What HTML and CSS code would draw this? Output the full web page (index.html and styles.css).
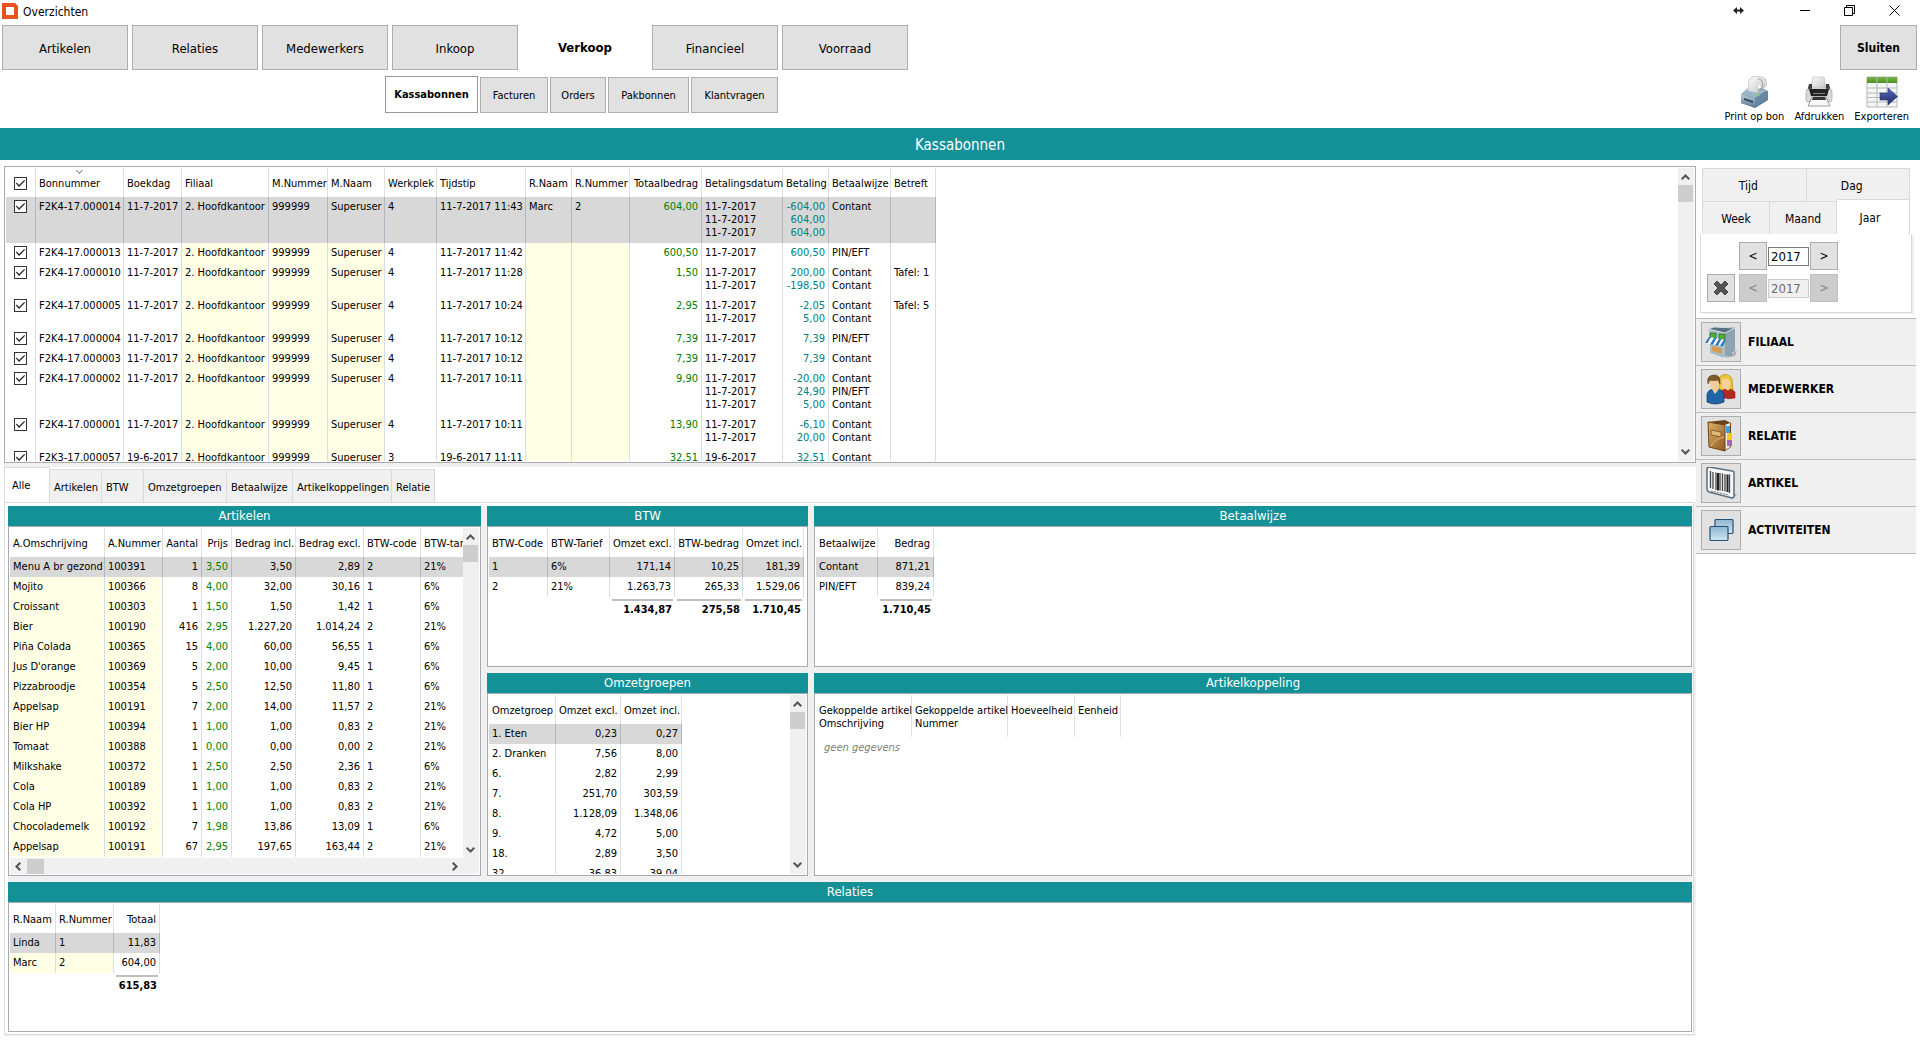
FILE: index.html
```html
<!DOCTYPE html>
<html lang="nl">
<head>
<meta charset="utf-8">
<title>Overzichten</title>
<link rel="stylesheet" href="styles.css">
</head>
<body>
<svg class="defs" aria-hidden="true">
  <defs>
    <symbol id="up" viewBox="0 0 9 6"><path d="M0 4.5 4.5 0 9 4.5 7.6 6 4.5 3 1.4 6Z" fill="#555"/></symbol>
    <symbol id="down" viewBox="0 0 9 6"><path d="M0 1.5 4.5 6 9 1.5 7.6 0 4.5 3 1.4 0Z" fill="#555"/></symbol>
    <symbol id="left" viewBox="0 0 6 9"><path d="M4.500 0 0 4.500 4.500 9 6 7.600 3 4.500 6 1.400Z" fill="#555"/></symbol>
    <symbol id="right" viewBox="0 0 6 9"><path d="M1.500 0 6 4.500 1.500 9 0 7.600 3 4.500 0 1.400Z" fill="#555"/></symbol>
    <linearGradient id="steel" x1="0" y1="0" x2="0" y2="1"><stop offset="0" stop-color="#b9cad8"/><stop offset="1" stop-color="#5f7f99"/></linearGradient>
    <linearGradient id="paper" x1="0" y1="0" x2="1" y2="1"><stop offset="0" stop-color="#fff"/><stop offset="1" stop-color="#bfc2c4"/></linearGradient>
    <linearGradient id="glass" x1="0" y1="0" x2="0" y2="1"><stop offset="0" stop-color="#8fb6d2"/><stop offset="1" stop-color="#cfe6f1"/></linearGradient>
    <linearGradient id="leather" x1="0" y1="0" x2="1" y2="1"><stop offset="0" stop-color="#dcb26c"/><stop offset="1" stop-color="#8f5a1e"/></linearGradient>
    <linearGradient id="green" x1="0" y1="0" x2="0" y2="1"><stop offset="0" stop-color="#7ab648"/><stop offset="1" stop-color="#4d8f1e"/></linearGradient>
    <linearGradient id="navy" x1="0" y1="0" x2="0" y2="1"><stop offset="0" stop-color="#5a6ab5"/><stop offset="1" stop-color="#1c2a6b"/></linearGradient>
  </defs>
</svg>

<header class="titlebar">
  <svg class="logo" viewBox="0 0 16 16"><path d="M0 0H13L16 3V16H0Z" fill="#e9511d"/><path d="M4 4H12V12H4Z" fill="#fff"/></svg>
  <h1>Overzichten</h1>
  <div class="window-buttons">
    <button type="button" aria-label="Verplaatsen"><svg width="11" height="9" viewBox="0 0 11 9"><path d="M0 4.500 4 1V3.500H7V1L11 4.500 7 8V5.500H4V8Z" fill="#222"/></svg></button>
    <button type="button" aria-label="Minimaliseren"><svg width="10" height="11" viewBox="0 0 10 11"><path d="M0 5.500H10" stroke="#000"/></svg></button>
    <button type="button" aria-label="Herstellen"><svg width="11" height="11" viewBox="0 0 11 11"><path d="M.5 2.500H8.500V10.500H.5ZM2.500 2.500V.5H10.500V8.500H8.500" fill="none" stroke="#000"/></svg></button>
    <button type="button" aria-label="Venster sluiten"><svg width="11" height="11" viewBox="0 0 11 11"><path d="M.5.5 10.500 10.500M10.500.5.5 10.500" stroke="#000"/></svg></button>
  </div>
</header>

<nav class="mainnav">
  <button type="button">Artikelen</button>
  <button type="button">Relaties</button>
  <button type="button">Medewerkers</button>
  <button type="button">Inkoop</button>
  <button type="button" class="current">Verkoop</button>
  <button type="button">Financieel</button>
  <button type="button">Voorraad</button>
  <button type="button" class="close">Sluiten</button>
</nav>

<div class="subbar">
  <nav class="subnav">
    <button type="button" class="current">Kassabonnen</button>
    <button type="button">Facturen</button>
    <button type="button">Orders</button>
    <button type="button">Pakbonnen</button>
    <button type="button">Klantvragen</button>
  </nav>
  <div class="tools">
    <button type="button">
      <svg width="32" height="32" viewBox="0 0 32 32"><path d="M9 16 3 19V27L17 32 30 24V16L24 12Z" fill="#4f6f88"/><path d="M3 18 17 22V31L3 27Z" fill="url(#steel)"/><path d="M17 22 30 15V23L17 31Z" fill="#6887a0"/><path d="M3 18 10 12 30 14 17 22Z" fill="#9bb4c7"/><path d="M9 15C12 12 8 4 14 1 18 0 26 0 28 4 30 9 27 12 24 13 22 11 24 7 20 8 19 11 21 15 20 17Z" fill="url(#paper)" stroke="#b5b5b5" stroke-width=".6"/><path d="M20 3C25 3 25 8 24 12" fill="none" stroke="#999" stroke-width="1"/><path d="M6 22 15 25V27L6 24Z" fill="#34495b"/><circle cx="21" cy="19" r="1.200" fill="#6fd42c"/></svg>
      <span>Print op bon</span></button>
    <button type="button">
      <svg width="32" height="32" viewBox="0 0 32 32"><path d="M10 1H21L23 12H8Z" fill="url(#paper)" stroke="#bbb" stroke-width=".7"/><path d="M6 8H9V13H23V8H26L29 20H3Z" fill="#3c3c3c"/><path d="M3 16Q3 13 6 13H26Q29 13 29 16V24Q29 26 26 26H6Q3 26 3 24Z" fill="#d9d9d9" stroke="#999" stroke-width=".6"/><path d="M6 13H26L24 20H8Z" fill="#222"/><path d="M10 17H22V18H10Z" fill="#888"/><path d="M9 21H23L27 30H5Z" fill="#f8f8f8" stroke="#777" stroke-width=".7"/><path d="M10 21H22L23 24H9Z" fill="#333"/></svg>
      <span>Afdrukken</span></button>
    <button type="button">
      <svg width="32" height="32" viewBox="0 0 32 32"><path d="M1 1H31V31H1Z" fill="#f4f5f5" stroke="#b5b8b8"/><path d="M1 1H31V7H1Z" fill="url(#green)"/><path d="M1 12H31M1 17H31M1 21.500H31M1 26H31M11 1V31M21 1V31" stroke="#b5baba"/><path d="M14 17H22V12L31.500 20.500 22 29V24H14Z" fill="url(#navy)" stroke="#26336f" stroke-width=".6"/></svg>
      <span>Exporteren</span></button>
  </div>
</div>

<h2 class="banner">Kassabonnen</h2>

<main class="workspace">
  <div class="content">
    <section class="frame receipts">
      <div class="view">
        <table>
          <colgroup><col><col><col><col><col><col><col><col><col><col><col><col><col><col><col></colgroup>
          <thead><tr><th><input type="checkbox" checked aria-label="Alles selecteren"></th><th class="sorted">Bonnummer</th><th>Boekdag</th><th>Filiaal</th><th>M.Nummer</th><th>M.Naam</th><th>Werkplek</th><th>Tijdstip</th><th>R.Naam</th><th>R.Nummer</th><th>Totaalbedrag</th><th>Betalingsdatum</th><th>Betaling</th><th>Betaalwijze</th><th>Betreft</th></tr></thead>
          <tbody>
            <tr class="selected"><td><input type="checkbox" checked aria-label="F2K4-17.000014"></td><td>F2K4-17.000014</td><td>11-7-2017</td><td>2. Hoofdkantoor</td><td>999999</td><td>Superuser</td><td>4</td><td>11-7-2017 11:43</td><td>Marc</td><td>2</td><td>604,00</td><td>11-7-2017<br>11-7-2017<br>11-7-2017</td><td>-604,00<br>604,00<br>604,00</td><td>Contant</td><td></td></tr>
            <tr><td><input type="checkbox" checked aria-label="F2K4-17.000013"></td><td>F2K4-17.000013</td><td>11-7-2017</td><td>2. Hoofdkantoor</td><td>999999</td><td>Superuser</td><td>4</td><td>11-7-2017 11:42</td><td></td><td></td><td>600,50</td><td>11-7-2017</td><td>600,50</td><td>PIN/EFT</td><td></td></tr>
            <tr><td><input type="checkbox" checked aria-label="F2K4-17.000010"></td><td>F2K4-17.000010</td><td>11-7-2017</td><td>2. Hoofdkantoor</td><td>999999</td><td>Superuser</td><td>4</td><td>11-7-2017 11:28</td><td></td><td></td><td>1,50</td><td>11-7-2017<br>11-7-2017</td><td>200,00<br>-198,50</td><td>Contant<br>Contant</td><td>Tafel: 1</td></tr>
            <tr><td><input type="checkbox" checked aria-label="F2K4-17.000005"></td><td>F2K4-17.000005</td><td>11-7-2017</td><td>2. Hoofdkantoor</td><td>999999</td><td>Superuser</td><td>4</td><td>11-7-2017 10:24</td><td></td><td></td><td>2,95</td><td>11-7-2017<br>11-7-2017</td><td>-2,05<br>5,00</td><td>Contant<br>Contant</td><td>Tafel: 5</td></tr>
            <tr><td><input type="checkbox" checked aria-label="F2K4-17.000004"></td><td>F2K4-17.000004</td><td>11-7-2017</td><td>2. Hoofdkantoor</td><td>999999</td><td>Superuser</td><td>4</td><td>11-7-2017 10:12</td><td></td><td></td><td>7,39</td><td>11-7-2017</td><td>7,39</td><td>PIN/EFT</td><td></td></tr>
            <tr><td><input type="checkbox" checked aria-label="F2K4-17.000003"></td><td>F2K4-17.000003</td><td>11-7-2017</td><td>2. Hoofdkantoor</td><td>999999</td><td>Superuser</td><td>4</td><td>11-7-2017 10:12</td><td></td><td></td><td>7,39</td><td>11-7-2017</td><td>7,39</td><td>Contant</td><td></td></tr>
            <tr><td><input type="checkbox" checked aria-label="F2K4-17.000002"></td><td>F2K4-17.000002</td><td>11-7-2017</td><td>2. Hoofdkantoor</td><td>999999</td><td>Superuser</td><td>4</td><td>11-7-2017 10:11</td><td></td><td></td><td>9,90</td><td>11-7-2017<br>11-7-2017<br>11-7-2017</td><td>-20,00<br>24,90<br>5,00</td><td>Contant<br>PIN/EFT<br>Contant</td><td></td></tr>
            <tr><td><input type="checkbox" checked aria-label="F2K4-17.000001"></td><td>F2K4-17.000001</td><td>11-7-2017</td><td>2. Hoofdkantoor</td><td>999999</td><td>Superuser</td><td>4</td><td>11-7-2017 10:11</td><td></td><td></td><td>13,90</td><td>11-7-2017<br>11-7-2017</td><td>-6,10<br>20,00</td><td>Contant<br>Contant</td><td></td></tr>
            <tr><td><input type="checkbox" checked aria-label="F2K3-17.000057"></td><td>F2K3-17.000057</td><td>19-6-2017</td><td>2. Hoofdkantoor</td><td>999999</td><td>Superuser</td><td>3</td><td>19-6-2017 11:11</td><td></td><td></td><td>32,51</td><td>19-6-2017</td><td>32,51</td><td>Contant</td><td></td></tr>
          </tbody>
        </table>
      </div>
      <div class="vscroll"><svg width="9" height="6"><use href="#up"/></svg><i></i><svg width="9" height="6"><use href="#down"/></svg></div>
    </section>

    <section class="details">
      <nav class="tabs">
        <button type="button" class="current">Alle</button>
        <button type="button">Artikelen</button>
        <button type="button">BTW</button>
        <button type="button">Omzetgroepen</button>
        <button type="button">Betaalwijze</button>
        <button type="button">Artikelkoppelingen</button>
        <button type="button">Relatie</button>
      </nav>
      <div class="tabpage">
        <div class="panels">
          <section class="panel articles">
            <h3>Artikelen</h3>
            <div class="frame">
              <div class="column">
                <div class="view">
                  <table>
                    <colgroup><col><col><col><col><col><col><col><col></colgroup>
                    <thead><tr><th>A.Omschrijving</th><th>A.Nummer</th><th>Aantal</th><th>Prijs</th><th>Bedrag incl.</th><th>Bedrag excl.</th><th>BTW-code</th><th>BTW-tarief</th></tr></thead>
                    <tbody>
                      <tr class="selected"><td>Menu A br gezond</td><td>100391</td><td>1</td><td>3,50</td><td>3,50</td><td>2,89</td><td>2</td><td>21%</td></tr>
                      <tr><td>Mojito</td><td>100366</td><td>8</td><td>4,00</td><td>32,00</td><td>30,16</td><td>1</td><td>6%</td></tr>
                      <tr><td>Croissant</td><td>100303</td><td>1</td><td>1,50</td><td>1,50</td><td>1,42</td><td>1</td><td>6%</td></tr>
                      <tr><td>Bier</td><td>100190</td><td>416</td><td>2,95</td><td>1.227,20</td><td>1.014,24</td><td>2</td><td>21%</td></tr>
                      <tr><td>Piña Colada</td><td>100365</td><td>15</td><td>4,00</td><td>60,00</td><td>56,55</td><td>1</td><td>6%</td></tr>
                      <tr><td>Jus D'orange</td><td>100369</td><td>5</td><td>2,00</td><td>10,00</td><td>9,45</td><td>1</td><td>6%</td></tr>
                      <tr><td>Pizzabroodje</td><td>100354</td><td>5</td><td>2,50</td><td>12,50</td><td>11,80</td><td>1</td><td>6%</td></tr>
                      <tr><td>Appelsap</td><td>100191</td><td>7</td><td>2,00</td><td>14,00</td><td>11,57</td><td>2</td><td>21%</td></tr>
                      <tr><td>Bier HP</td><td>100394</td><td>1</td><td>1,00</td><td>1,00</td><td>0,83</td><td>2</td><td>21%</td></tr>
                      <tr><td>Tomaat</td><td>100388</td><td>1</td><td>0,00</td><td>0,00</td><td>0,00</td><td>2</td><td>21%</td></tr>
                      <tr><td>Milkshake</td><td>100372</td><td>1</td><td>2,50</td><td>2,50</td><td>2,36</td><td>1</td><td>6%</td></tr>
                      <tr><td>Cola</td><td>100189</td><td>1</td><td>1,00</td><td>1,00</td><td>0,83</td><td>2</td><td>21%</td></tr>
                      <tr><td>Cola HP</td><td>100392</td><td>1</td><td>1,00</td><td>1,00</td><td>0,83</td><td>2</td><td>21%</td></tr>
                      <tr><td>Chocolademelk</td><td>100192</td><td>7</td><td>1,98</td><td>13,86</td><td>13,09</td><td>1</td><td>6%</td></tr>
                      <tr><td>Appelsap</td><td>100191</td><td>67</td><td>2,95</td><td>197,65</td><td>163,44</td><td>2</td><td>21%</td></tr>
                    </tbody>
                  </table>
                </div>
                <div class="hscroll"><svg width="6" height="9"><use href="#left"/></svg><i></i><svg width="6" height="9"><use href="#right"/></svg></div>
              </div>
              <div class="vscroll with-corner"><svg width="9" height="6"><use href="#up"/></svg><i></i><svg width="9" height="6"><use href="#down"/></svg></div>
            </div>
          </section>

          <section class="panel vat">
            <h3>BTW</h3>
            <div class="frame"><div class="view">
              <table>
                <colgroup><col><col><col><col><col></colgroup>
                <thead><tr><th>BTW-Code</th><th>BTW-Tarief</th><th>Omzet excl.</th><th>BTW-bedrag</th><th>Omzet incl.</th></tr></thead>
                <tbody>
                  <tr class="selected"><td>1</td><td>6%</td><td>171,14</td><td>10,25</td><td>181,39</td></tr>
                  <tr><td>2</td><td>21%</td><td>1.263,73</td><td>265,33</td><td>1.529,06</td></tr>
                </tbody>
                <tfoot><tr><td></td><td></td><td><b>1.434,87</b></td><td><b>275,58</b></td><td><b>1.710,45</b></td></tr></tfoot>
              </table>
            </div></div>
          </section>

          <section class="panel payments">
            <h3>Betaalwijze</h3>
            <div class="frame"><div class="view">
              <table>
                <colgroup><col><col></colgroup>
                <thead><tr><th>Betaalwijze</th><th>Bedrag</th></tr></thead>
                <tbody>
                  <tr class="selected"><td>Contant</td><td>871,21</td></tr>
                  <tr><td>PIN/EFT</td><td>839,24</td></tr>
                </tbody>
                <tfoot><tr><td></td><td><b>1.710,45</b></td></tr></tfoot>
              </table>
            </div></div>
          </section>

          <section class="panel groups">
            <h3>Omzetgroepen</h3>
            <div class="frame">
              <div class="view">
                <table>
                  <colgroup><col><col><col></colgroup>
                  <thead><tr><th>Omzetgroep</th><th>Omzet excl.</th><th>Omzet incl.</th></tr></thead>
                  <tbody>
                    <tr class="selected"><td>1. Eten</td><td>0,23</td><td>0,27</td></tr>
                    <tr><td>2. Dranken</td><td>7,56</td><td>8,00</td></tr>
                    <tr><td>6.</td><td>2,82</td><td>2,99</td></tr>
                    <tr><td>7.</td><td>251,70</td><td>303,59</td></tr>
                    <tr><td>8.</td><td>1.128,09</td><td>1.348,06</td></tr>
                    <tr><td>9.</td><td>4,72</td><td>5,00</td></tr>
                    <tr><td>18.</td><td>2,89</td><td>3,50</td></tr>
                    <tr><td>32.</td><td>36,83</td><td>39,04</td></tr>
                  </tbody>
                </table>
              </div>
              <div class="vscroll"><svg width="9" height="6"><use href="#up"/></svg><i></i><svg width="9" height="6"><use href="#down"/></svg></div>
            </div>
          </section>

          <section class="panel links">
            <h3>Artikelkoppeling</h3>
            <div class="frame"><div class="view">
              <table>
                <colgroup><col><col><col><col></colgroup>
                <thead><tr><th>Gekoppelde artikel<br>Omschrijving</th><th>Gekoppelde artikel<br>Nummer</th><th>Hoeveelheid</th><th>Eenheid</th></tr></thead>
              </table>
              <p class="empty">geen gegevens</p>
            </div></div>
          </section>

          <section class="panel relations">
            <h3>Relaties</h3>
            <div class="frame"><div class="view">
              <table>
                <colgroup><col><col><col></colgroup>
                <thead><tr><th>R.Naam</th><th>R.Nummer</th><th>Totaal</th></tr></thead>
                <tbody>
                  <tr class="selected"><td>Linda</td><td>1</td><td>11,83</td></tr>
                  <tr><td>Marc</td><td>2</td><td>604,00</td></tr>
                </tbody>
                <tfoot><tr><td></td><td></td><td><b>615,83</b></td></tr></tfoot>
              </table>
            </div></div>
          </section>
        </div>
      </div>
    </section>
  </div>

  <aside class="sidebar">
    <section class="period">
      <div class="period-tabs wide">
        <button type="button">Tijd</button>
        <button type="button">Dag</button>
      </div>
      <div class="period-tabs">
        <button type="button">Week</button>
        <button type="button">Maand</button>
        <button type="button" class="current">Jaar</button>
      </div>
      <div class="period-page">
        <div class="stepper">
          <button type="button" aria-label="Vorig jaar">&lt;</button>
          <input type="text" value="2017" aria-label="Jaar van">
          <button type="button" aria-label="Volgend jaar">&gt;</button>
        </div>
        <div class="stepper">
          <button type="button" class="clear" aria-label="Wissen"><svg width="16" height="16" viewBox="0 0 16 16"><path d="M4 1 8 5 12 1 15 4 11 8 15 12 12 15 8 11 4 15 1 12 5 8 1 4Z" fill="#555" stroke="#333" stroke-width=".8"/></svg></button>
          <button type="button" disabled aria-label="Vorig eindjaar">&lt;</button>
          <input type="text" value="2017" disabled aria-label="Jaar tot">
          <button type="button" disabled aria-label="Volgend eindjaar">&gt;</button>
        </div>
      </div>
    </section>
    <ul class="filters">
      <li><button type="button" aria-labelledby="l-filiaal">
        <svg width="32" height="32" viewBox="0 0 32 32"><path d="M27 28 32 24 30 30 20 32Z" fill="#aaa"/><path d="M4 3 8 1H30L27 6V29L18 31 6 27Z" fill="#7f98a8"/><path d="M3 3 20 7V31L5 27V8Z" fill="#a9bfcc"/><path d="M20 7 30 2V25L20 31Z" fill="#8ca3b2"/><path d="M3 3 9 1 30 2 20 7Z" fill="#5b707f" stroke="#d5e0e7"/><path d="M5 7H11V13H5ZM14 8H20V14H14Z" fill="#4caf2e" stroke="#263" stroke-width=".7"/><path d="M4 11 21 14 17 20 0 17Z" fill="#f4f8fb"/><path d="M4 11H6L2.500 17H0ZM9 12H11.500L8 18.500H5ZM14 13H16.500L13 19.500H10ZM19 13.500H21L18 20H15Z" fill="#2874c0"/><path d="M7 20 17 22V28L7 25Z" fill="#d89a55"/></svg>
      </button><strong id="l-filiaal">FILIAAL</strong></li>
      <li><button type="button" aria-labelledby="l-medewerker">
        <svg width="32" height="32" viewBox="0 0 32 32"><path d="M14 6C15 0 25 0 27 6L28 18H14Z" fill="#eac638" stroke="#a8811a" stroke-width=".6"/><path d="M17 7Q21 4 25 8V14L22 18 17 15Z" fill="#f6cf9c"/><path d="M16 24V18L20 16 23 18 26 16 30 19V25Q24 27 16 24Z" fill="#b32a20" stroke="#711" stroke-width=".5"/><path d="M2 29V21Q3 17 8 16H13Q18 17 19 21V29Q10 33 2 29Z" fill="#1e66a8" stroke="#0c355f" stroke-width=".7"/><path d="M7 16 10 21 14 16Z" fill="#f6cf9c"/><path d="M5 7Q9 3 14 7V12Q13 18 10 18 6 17 5 12Z" fill="#f3cc99"/><path d="M3 11Q1 3 8 2 16 1 15 11L13 7Q8 8 5 7Z" fill="#7d5a2b" stroke="#4a3415" stroke-width=".5"/></svg>
      </button><strong id="l-medewerker">MEDEWERKER</strong></li>
      <li><button type="button" aria-labelledby="l-relatie">
        <svg width="32" height="32" viewBox="0 0 32 32"><path d="M3 2 20 0 26 3V27L20 31Z" fill="#6b431a"/><path d="M20 5 25 3V27L20 30Z" fill="#f6f1e5"/><path d="M21 6H25V13H21Z" fill="#3f9fe0"/><path d="M22 13H27V20H22Z" fill="#f2c820"/><path d="M22 20H27V26H22Z" fill="#a468b4"/><path d="M3 2 20 5V31L4 27Z" fill="url(#leather)" stroke="#6b431a"/><path d="M6 10 16 12V17L6 15Z" fill="#dcb978" stroke="#8f5f22"/><path d="M6 26C10 20 14 18 19 17" fill="none" stroke="#e2bf80"/></svg>
      </button><strong id="l-relatie">RELATIE</strong></li>
      <li><button type="button" aria-labelledby="l-artikel">
        <svg width="32" height="32" viewBox="0 0 32 32"><path d="M28 25 32 28 26 32Z" fill="#aaa"/><path d="M2 2Q2 0 4 0L27 4Q29 4 29 6V29Q29 31 27 31L4 25Q2 24 2 22Z" fill="#f5f7f8" stroke="#5b7180" stroke-width="1.500"/><path d="M5.500 4V21M8 5V22M11 5.500V23M15 6V23.500M17.500 6.500V24M20 7V24.500M24.500 7.500V26" stroke="#444" stroke-width="1.300"/><path d="M13 6V23.500M22.500 7.500V25" stroke="#222" stroke-width="2"/><path d="M6 24 24 28" stroke="#777" stroke-dasharray="2 1"/></svg>
      </button><strong id="l-artikel">ARTIKEL</strong></li>
      <li><button type="button" aria-labelledby="l-activiteiten">
        <svg width="32" height="32" viewBox="0 0 32 32"><rect x="10" y="5.500" width="18" height="14" rx="1" fill="url(#glass)" stroke="#245071" stroke-width="1.200"/><rect x="5" y="12.500" width="18" height="14" rx="1" fill="url(#glass)" stroke="#245071" stroke-width="1.200"/></svg>
      </button><strong id="l-activiteiten">ACTIVITEITEN</strong></li>
    </ul>
  </aside>
</main>
</body>
</html>
```

FILE: styles.css
```css
* { box-sizing: border-box; }

body {
  margin: 0;
  height: 100vh;
  min-height: 760px;
  display: flex;
  flex-direction: column;
  background: #fff;
  color: #000;
  font: 11px/13px "DejaVu Sans Condensed", "DejaVu Sans", sans-serif;
}

button, input { font: inherit; color: inherit; margin: 0; }
button { padding: 0; border: 1px solid #adadad; background: #e1e1e1; white-space: nowrap; }
h1, h2, h3, p, ul { margin: 0; padding: 0; font-weight: normal; }
ul { list-style: none; }
svg { display: block; flex: none; }
.defs { position: absolute; width: 0; height: 0; }

/* Title bar */
.titlebar { display: flex; height: 25px; padding: 3px 20px 0 2px; gap: 5px; }
.titlebar h1 { font-size: 12px; line-height: 18px; }
.logo { width: 16px; height: 16px; }
.window-buttons { display: flex; align-items: center; height: 15px; margin-left: auto; }
.window-buttons button { display: flex; justify-content: flex-end; width: 45px; border: 0; background: none; }
.window-buttons button:first-child { width: 66px; margin-right: 21px; }

/* Main navigation */
.mainnav { display: flex; gap: 4px; padding: 0 3px 0 2px; font-size: 13px; }
.mainnav button { width: 126px; height: 45px; padding-top: 2px; }
.mainnav .current { padding-top: 0; border: 0; background: none; font-weight: bold; }
.mainnav .close { width: 77px; margin-left: auto; font-size: 12px; font-weight: bold; }

.subbar { display: flex; justify-content: space-between; align-items: flex-start; height: 58px; padding: 6px 11px 0 385px; }
.subnav { display: flex; align-items: flex-end; gap: 2px; }
.subnav button { height: 36px; padding: 1px 0 0; }
.subnav button:nth-child(1) { width: 93px; }
.subnav button:nth-child(2) { width: 68px; }
.subnav button:nth-child(3) { width: 56px; }
.subnav button:nth-child(4) { width: 81px; }
.subnav button:nth-child(5) { width: 87px; }
.subnav .current { height: 37px; padding: 0; border-color: #999; background: #fff; font-weight: bold; }
.tools { display: flex; gap: 10px; }
.tools button { display: flex; flex-direction: column; align-items: center; gap: 2px; border: 0; background: none; }

.banner { height: 32px; background: #149197; color: #fff; font-size: 15px; line-height: 34px; text-align: center; }

/* Workspace */
.workspace { flex: 1; display: grid; grid-template: minmax(0, 1fr) / minmax(0, 1fr) 220px; min-height: 0; padding: 6px 4px 4px; }
.content { display: grid; grid-template: minmax(0, 297fr) minmax(0, 569fr) / minmax(0, 1fr); gap: 4px; background: #f0f0f0; }
.frame { display: flex; min-height: 0; min-width: 0; padding: 1px; border: 1px solid #a9a9b0; background: #fff; }
.view { flex: 1; min-width: 0; min-height: 0; overflow: hidden; }
.details { display: flex; flex-direction: column; }

/* Data tables */
table { table-layout: fixed; width: 0; border-collapse: separate; border-spacing: 0; }
th, td { height: 20px; padding: 3px 3px 4px; border-right: 1px solid #d5deea; text-align: left; vertical-align: top; font-weight: normal; white-space: nowrap; }
th { height: 29px; padding-top: 9px; padding-bottom: 7px; border-color: #e0e0e0; }
.selected td { background: #d8d8d8; border-color: #adb8c4; }
tfoot td { padding: 2px; border: 0; }
tfoot b { display: block; padding: 2px 1px 0; border-top: 2px solid #bfbfbf; }

.receipts col:nth-child(1) { width: 30px; }
.receipts col:nth-child(2) { width: 88px; }
.receipts col:nth-child(3) { width: 58px; }
.receipts col:nth-child(4) { width: 87px; }
.receipts col:nth-child(5) { width: 59px; }
.receipts col:nth-child(6) { width: 57px; }
.receipts col:nth-child(7) { width: 52px; }
.receipts col:nth-child(8) { width: 89px; }
.receipts col:nth-child(9) { width: 46px; }
.receipts col:nth-child(10) { width: 58px; }
.receipts col:nth-child(11) { width: 72px; }
.receipts col:nth-child(12) { width: 81px; }
.receipts col:nth-child(13) { width: 46px; }
.receipts col:nth-child(14) { width: 62px; }
.receipts col:nth-child(15) { width: 45px; }
.receipts :is(th, td):first-child { padding-left: 8px; }
.receipts :is(th, td):is(:nth-child(11), :nth-child(13)) { text-align: right; }
.receipts tr:not(.selected) td:is(:nth-child(4), :nth-child(5), :nth-child(6), :nth-child(9), :nth-child(10)) { background: #ffffe6; }
.receipts td:nth-child(11) { color: #008000; }
.receipts td:nth-child(13) { color: #008080; }

.sorted { position: relative; }
.sorted::before { content: ""; position: absolute; top: 0; left: 41px; width: 4px; height: 4px; border: solid #888; border-width: 0 1px 1px 0; transform: rotate(45deg); }

input[type="checkbox"] { appearance: none; display: block; width: 13px; height: 13px; border: 1px solid #333; background: #fff; }
input[type="checkbox"]:checked::before { content: ""; display: block; width: 11px; height: 11px; background: #222; clip-path: polygon(9% 50%, 16% 42%, 37% 64%, 84% 18%, 92% 26%, 37% 82%); }

/* Scroll bars */
.vscroll { display: flex; flex-direction: column; align-items: center; width: 16px; padding: 6px 1px 6px 0; background: #f0f0f0; }
.vscroll i { width: 15px; height: 17px; margin: 5px 0 auto; background: #cdcdcd; }
.vscroll.with-corner { padding-bottom: 21px; }
.hscroll { display: flex; align-items: center; height: 16px; padding: 0 5px; background: #f0f0f0; }
.hscroll i { width: 17px; height: 15px; margin: 0 auto 0 6px; background: #cdcdcd; }

/* Detail tabs */
.tabs { display: flex; align-items: flex-end; height: 35px; background: #fff; }
.tabs button { height: 33px; padding: 2px 0 0 4px; border: solid #d9d9d9; border-width: 1px 1px 0 0; background: #f0f0f0; text-align: left; }
.tabs button:nth-child(2) { width: 52px; }
.tabs button:nth-child(3) { width: 42px; }
.tabs button:nth-child(4) { width: 83px; }
.tabs button:nth-child(5) { width: 66px; }
.tabs button:nth-child(6) { width: 99px; }
.tabs button:nth-child(7) { width: 43px; }
.tabs .current { height: 35px; width: 46px; padding: 0 0 0 7px; border-left-width: 1px; background: #fff; }
.tabpage { flex: 1; min-height: 0; display: flex; margin: 0 2px 1px 0; padding: 3px 1px 2px 3px; border: 1px solid #d9d9d9; background: #fff; }

.panels {
  flex: 1;
  min-width: 0;
  display: grid;
  grid-template-columns: minmax(0, 473fr) minmax(0, 321fr) minmax(0, 878fr);
  grid-template-rows: minmax(0, 161fr) minmax(0, 203fr) minmax(0, 150fr);
  grid-template-areas: "articles vat payments" "articles groups links" "relations relations relations";
  gap: 6px;
  background: #f0f0f0;
}
.panel { display: flex; flex-direction: column; min-width: 0; min-height: 0; }
.panel h3 { height: 20px; background: #149197; color: #fff; font-size: 13px; line-height: 19px; text-align: center; }
.panel > .frame { flex: 1; }
.column { flex: 1; display: flex; flex-direction: column; min-width: 0; }

.articles { grid-area: articles; }
.vat { grid-area: vat; }
.payments { grid-area: payments; }
.groups { grid-area: groups; }
.links { grid-area: links; }
.relations { grid-area: relations; }

.articles col:nth-child(1) { width: 95px; }
.articles col:nth-child(2) { width: 58px; }
.articles col:nth-child(3) { width: 39px; }
.articles col:nth-child(4) { width: 30px; }
.articles col:nth-child(5) { width: 64px; }
.articles col:nth-child(6) { width: 68px; }
.articles col:nth-child(7) { width: 57px; }
.articles col:nth-child(8) { width: 62px; }
.articles :is(th, td):is(:nth-child(3), :nth-child(4), :nth-child(5), :nth-child(6)) { text-align: right; }
.articles td:nth-child(4) { color: #008000; }
.articles tr:not(.selected) td:nth-child(-n+2) { background: #ffffe6; }

.vat col:nth-child(1) { width: 59px; }
.vat col:nth-child(2) { width: 62px; }
.vat col:nth-child(3) { width: 65px; }
.vat col:nth-child(4) { width: 68px; }
.vat col:nth-child(5) { width: 61px; }
.vat :is(th, td):nth-child(n+3) { text-align: right; }

.payments col:nth-child(1) { width: 62px; }
.payments col:nth-child(2) { width: 56px; }
.payments :is(th, td):nth-child(2) { text-align: right; }

.groups col:nth-child(1) { width: 67px; }
.groups col:nth-child(2) { width: 65px; }
.groups col:nth-child(3) { width: 61px; }
.groups :is(th, td):nth-child(n+2) { text-align: right; }

.links col:nth-child(-n+2) { width: 96px; }
.links col:nth-child(3) { width: 67px; }
.links col:nth-child(4) { width: 46px; }
.empty { padding: 4px 8px; color: #808080; font-style: italic; }

.relations col:nth-child(1) { width: 46px; }
.relations col:nth-child(2) { width: 58px; }
.relations col:nth-child(3) { width: 46px; }
.relations :is(th, td):nth-child(3) { text-align: right; }
.relations tbody tr:not(.selected) td:nth-child(-n+2) { background: #ffffe6; }

/* Sidebar */
.period { padding: 2px 4px 0; }
.period-tabs { display: flex; align-items: flex-end; height: 33px; padding: 0 2px; }
.period-tabs button { flex: 1; height: 33px; padding-top: 2px; border-color: #d9d9d9; border-bottom: 0; background: #f0f0f0; font-size: 12px; }
.period-tabs.wide button { padding-right: 12px; }
.period-tabs button + button { border-left: 0; }
.period-tabs .current { height: 35px; padding-right: 6px; background: #fff; }
.period-page { display: flex; flex-direction: column; gap: 4px; height: 79px; padding: 8px 6px; border: 1px solid #d9d9d9; border-top: 0; box-shadow: 2px 1px #f0f0f0; }
.stepper { display: flex; align-items: center; gap: 1px; padding-left: 32px; font-size: 13px; }
.stepper button { width: 28px; height: 28px; font-size: 12px; }
.stepper .clear { display: flex; align-items: center; justify-content: center; margin: 0 3px 0 -32px; }
.stepper input { width: 41px; height: 19px; padding: 0 2px; border: 1px solid #7a7a7a; background: #fff; }
.stepper button:disabled { border-color: #bfbfbf; background: #ccc; color: #838383; }
.stepper input:disabled { border-color: #ccc; background: #f0f0f0; color: #6d6d6d; }

.filters { margin-top: 5px; border-top: 1px solid #bbb; }
.filters li { display: flex; align-items: center; gap: 7px; height: 47px; padding-left: 5px; border-bottom: 1px solid #bbb; background: #f0f0f0; }
.filters button { display: flex; align-items: center; justify-content: center; width: 40px; height: 40px; }
.filters strong { font-size: 12px; line-height: 16px; }
```
